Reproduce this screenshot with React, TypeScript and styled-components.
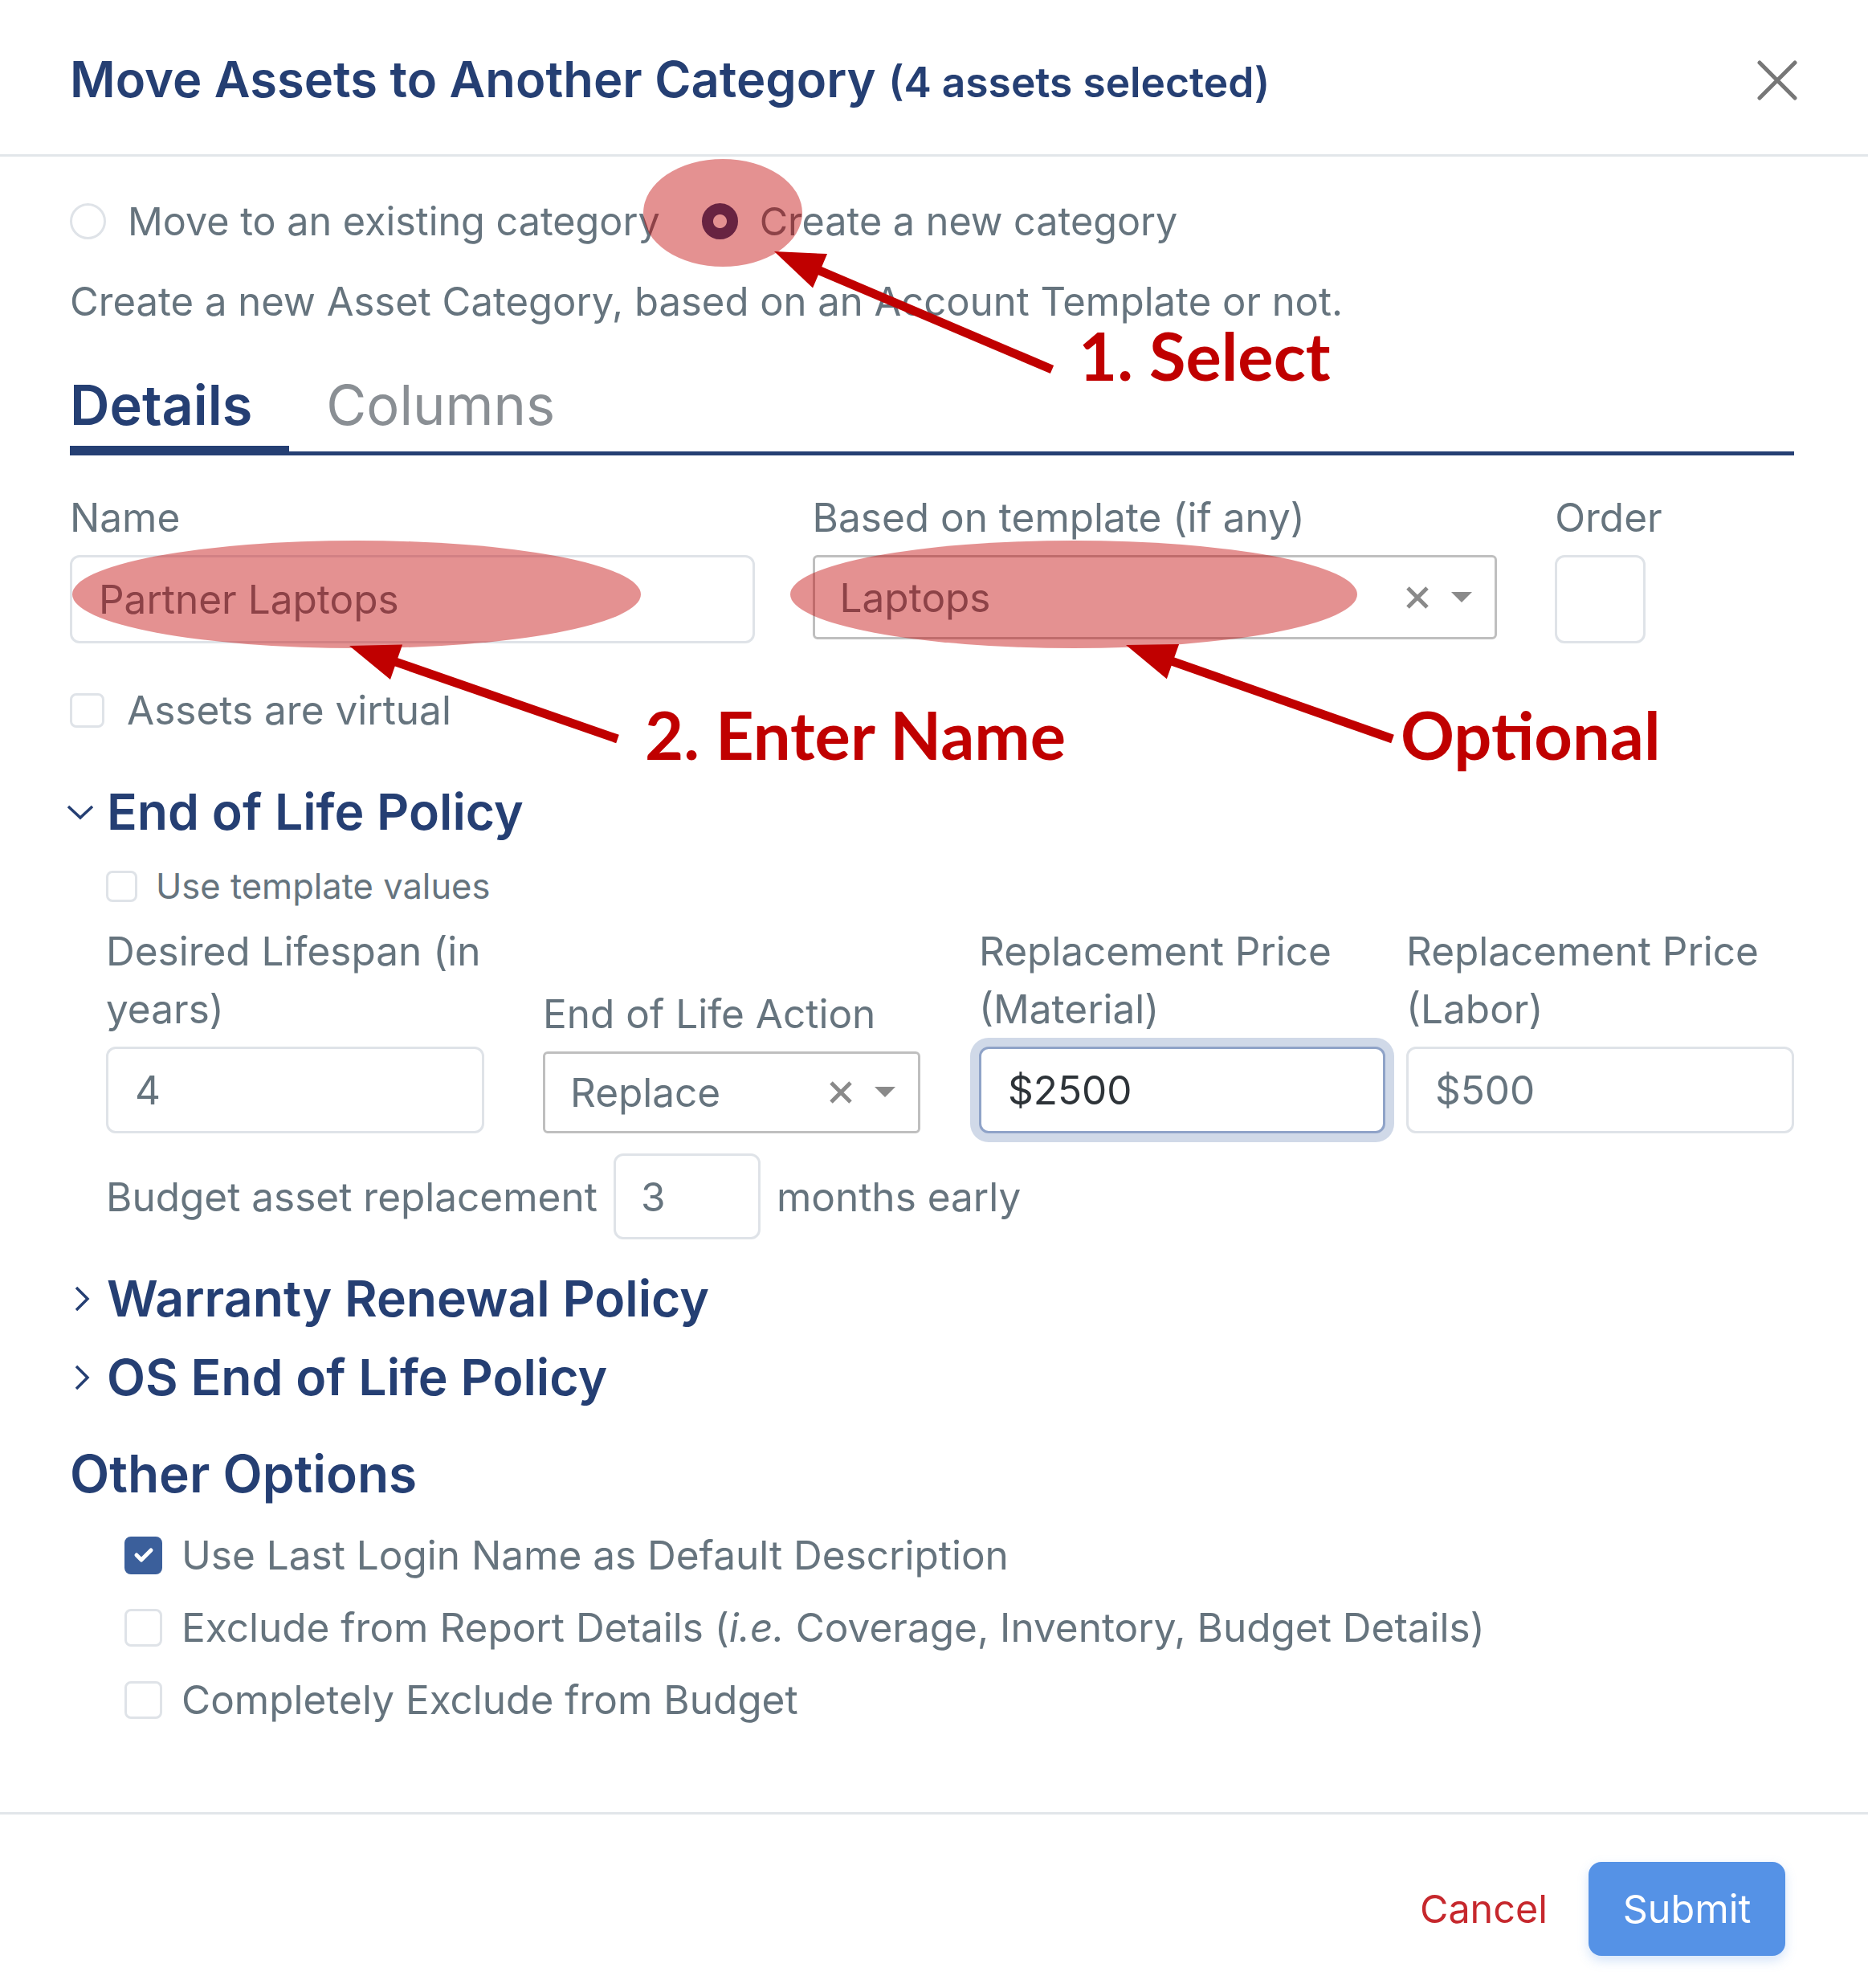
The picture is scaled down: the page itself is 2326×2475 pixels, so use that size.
import React from 'react';
import styled, { createGlobalStyle } from 'styled-components';

const navy = '#253f73';
const muted = '#66747e';
const line = '#dfe3e8';
const red = '#c00000';
const bodySize = 49.5;
const headSize = 62.5;

const GlobalStyle = createGlobalStyle`
  html, body { margin: 0; padding: 0; background: #fff; }
  body { font-family: Inter, "Open Sans", sans-serif; color: ${muted}; }
  * { box-sizing: border-box; }
`;

const Modal = styled.div`
  position: relative;
  width: 2326px;
  min-height: 2475px;
  background: #fff;
  overflow: hidden;
`;

const Header = styled.header`
  height: 195px;
  display: flex;
  align-items: center;
  justify-content: space-between;
  padding: 8px 88px 0 87px;
  border-bottom: 3px solid #e2e6ea;
`;

const Title = styled.h1`
  margin: 0;
  font-size: 61.5px;
  line-height: 72px;
  font-weight: 600;
  color: ${navy};
`;

const TitleNote = styled.span`
  font-size: 51.5px;
  font-weight: 600;
`;

const CloseButton = styled.button`
  width: 50px;
  height: 50px;
  padding: 0;
  border: 0;
  background: none;
  display: flex;
`;

const Body = styled.div`
  padding: 0 92px 104px 87px;
`;

const RadioRow = styled.div`
  margin-top: 44px;
  height: 72px;
  display: flex;
  align-items: center;
  font-size: 48.5px;
`;

const RadioOption = styled.label`
  display: flex;
  align-items: center;
  gap: 27px;
  margin-right: 52px;
`;

const Radio = styled.span<{ $checked?: boolean }>`
  width: 45px;
  height: 45px;
  border-radius: 50%;
  border: 3px solid ${(p) => (p.$checked ? navy : line)};
  background: ${(p) => (p.$checked ? `radial-gradient(circle, #fff 0 8px, ${navy} 9px)` : '#fff')};
`;

const Description = styled.p`
  margin: 29px 0 0;
  font-size: 49px;
  line-height: 72px;
`;

const TabList = styled.div`
  margin-top: 50px;
  display: flex;
  align-items: flex-end;
  box-shadow: inset 0 -5px 0 ${navy};
`;

const Tab = styled.div<{ $active?: boolean }>`
  font-size: 68.5px;
  line-height: 86px;
  padding: 0 46px 7px;
  font-weight: ${(p) => (p.$active ? 600 : 400)};
  color: ${(p) => (p.$active ? navy : '#8a8f94')};
  border-bottom: 12px solid ${(p) => (p.$active ? navy : 'transparent')};
  &:first-child { padding-left: 0; }
`;

const FieldGrid = styled.div`
  margin-top: 41px;
  display: grid;
  grid-template-columns: repeat(12, minmax(0, 1fr));
  column-gap: 72px;
`;

const Field = styled.div<{ $span: number }>`
  grid-column: span ${(p) => p.$span};
  min-width: 0;
  display: flex;
  flex-direction: column;
`;

const Label = styled.label`
  font-size: ${bodySize}px;
  line-height: 72px;
  margin-bottom: 11px;
  color: ${muted};
  white-space: nowrap;
`;

const TextInput = styled.input<{ $focused?: boolean; $height?: number }>`
  width: 100%;
  min-width: 0;
  height: ${(p) => p.$height ?? 110}px;
  border: 3px solid ${(p) => (p.$focused ? '#8fa3c8' : line)};
  border-radius: 12px;
  padding: 0 33px;
  font-family: Inter, "Open Sans", sans-serif;
  font-size: ${bodySize}px;
  color: ${(p) => (p.$focused ? '#2d3338' : muted)};
  background: #fff;
  outline: none;
  box-shadow: ${(p) => (p.$focused ? '0 0 0 11px #d0d9e8' : 'none')};
`;

const SelectBox = styled.div<{ $height: number }>`
  height: ${(p) => p.$height}px;
  display: flex;
  align-items: center;
  border: 3px solid #bfbfbf;
  border-radius: 6px;
  padding: 0 28px 0 31px;
  font-size: ${bodySize}px;
  color: ${muted};
`;

const SelectValue = styled.span`
  flex: 1;
`;

const SelectIcons = styled.span`
  display: flex;
  align-items: center;
  gap: 27px;
`;

const CheckRow = styled.label<{ $small?: boolean; $gap: number }>`
  display: flex;
  align-items: center;
  gap: ${(p) => p.$gap}px;
  font-size: ${(p) => (p.$small ? 43.5 : bodySize)}px;
  line-height: ${(p) => (p.$small ? 63 : 72)}px;
  color: ${muted};
`;

const Checkbox = styled.span<{ $size: number; $checked?: boolean }>`
  width: ${(p) => p.$size}px;
  height: ${(p) => p.$size}px;
  flex: none;
  border-radius: 8px;
  border: 3px solid ${(p) => (p.$checked ? '#3b5f9b' : line)};
  background: ${(p) => (p.$checked ? '#3b5f9b' : '#fff')};
  display: flex;
  align-items: center;
  justify-content: center;
`;

const VirtualRow = styled.div`
  margin-top: 47px;
`;

const SectionToggle = styled.div<{ $gap: number }>`
  margin-top: ${(p) => p.$gap}px;
  display: flex;
  align-items: center;
  gap: 13px;
  font-size: ${headSize}px;
  line-height: 72px;
  font-weight: 600;
  color: ${navy};
  svg { margin-left: -7px; }
`;

const SectionTitle = styled.h2`
  margin: 49px 0 0;
  font-size: ${headSize + 1.5}px;
  line-height: 72px;
  font-weight: 600;
  color: ${navy};
`;

const SectionBody = styled.div`
  padding-left: 45px;
`;

const TemplateRow = styled.div`
  margin-top: 26px;
`;

const PolicyRow = styled.div`
  margin-top: 13px;
  display: flex;
  align-items: flex-end;
`;

const PolicyField = styled.div<{ $width: number; $after: number }>`
  width: ${(p) => p.$width}px;
  margin-right: ${(p) => p.$after}px;
  display: flex;
  flex-direction: column;
`;

const BudgetRow = styled.div`
  margin-top: 25px;
  display: flex;
  align-items: center;
  gap: 20px;
  font-size: ${bodySize}px;
`;

const BudgetInput = styled(TextInput)`
  width: 183px;
  padding: 0 31px;
`;

const OptionList = styled.div`
  margin-top: 29px;
  padding-left: 68px;
  display: flex;
  flex-direction: column;
  gap: 18px;
`;

const Footer = styled.footer`
  border-top: 3px solid #e2e6ea;
  padding: 59px 103px 40px 0;
  display: flex;
  justify-content: flex-end;
  align-items: center;
  gap: 51px;
`;

const CancelButton = styled.button`
  border: 0;
  background: none;
  padding: 0;
  font-family: Inter, "Open Sans", sans-serif;
  font-size: 48.5px;
  color: #c6282d;
`;

const SubmitButton = styled.button`
  width: 245px;
  height: 117px;
  border: 0;
  border-radius: 16px;
  background: #5592e6;
  color: #fff;
  font-family: Inter, "Open Sans", sans-serif;
  font-size: 48.5px;
  box-shadow: 0 6px 14px rgba(85, 146, 230, 0.25);
`;

const Annotations = styled.svg`
  position: absolute;
  left: 0;
  top: 0;
  pointer-events: none;
`;

const AnnoText = styled.text`
  font-family: Lato, "Liberation Sans", sans-serif;
  font-weight: 700;
  font-size: 83px;
  fill: ${red};
`;

const CloseIcon = () => (
  <svg width="50" height="50" viewBox="0 0 50 50">
    <path d="M3 3 L47 47 M47 3 L3 47" stroke="#777" strokeWidth="5" strokeLinecap="round" />
  </svg>
);

const ClearIcon = () => (
  <svg width="30" height="30" viewBox="0 0 30 30">
    <path d="M3 3 L27 27 M27 3 L3 27" stroke="#8a8a8a" strokeWidth="5" />
  </svg>
);

const Caret = () => (
  <svg width="26" height="14" viewBox="0 0 26 14">
    <path d="M0 0 H26 L13 13 Z" fill="#8a8a8a" />
  </svg>
);

const ChevronDown = () => (
  <svg width="40" height="40" viewBox="0 0 40 40">
    <polyline points="5,14 20,28 35,14" fill="none" stroke={navy} strokeWidth="3.5" />
  </svg>
);

const ChevronRight = () => (
  <svg width="40" height="40" viewBox="0 0 40 40">
    <polyline points="15,7 29,21 15,35" fill="none" stroke={navy} strokeWidth="3.5" />
  </svg>
);

const CheckMark = () => (
  <svg width="28" height="28" viewBox="0 0 28 28">
    <polyline points="5,14 11,20 23,8" fill="none" stroke="#fff" strokeWidth="5" strokeLinecap="round" strokeLinejoin="round" />
  </svg>
);

type Pt = [number, number];

const Arrow = ({ from, to }: { from: Pt; to: Pt }) => {
  const [x1, y1] = from;
  const [x2, y2] = to;
  const len = Math.hypot(x2 - x1, y2 - y1);
  const ux = (x2 - x1) / len;
  const uy = (y2 - y1) / len;
  const head = 62;
  const half = 23;
  const bx = x2 - ux * head;
  const by = y2 - uy * head;
  return (
    <g>
      <line x1={x1} y1={y1} x2={bx + ux * 6} y2={by + uy * 6} stroke={red} strokeWidth={11} />
      <polygon
        points={`${x2},${y2} ${bx - uy * half},${by + ux * half} ${bx + uy * half},${by - ux * half}`}
        fill={red}
      />
    </g>
  );
};

const options = [
  { text: <>Use Last Login Name as Default Description</>, checked: true },
  { text: <>Exclude from Report Details (<i>i.e.</i> Coverage, Inventory, Budget Details)</>, checked: false },
  { text: <>Completely Exclude from Budget</>, checked: false },
];

const App = () => {
  return (
    <Modal>
      <GlobalStyle />
      <Header>
        <Title>
          Move Assets to Another Category <TitleNote>(4 assets selected)</TitleNote>
        </Title>
        <CloseButton aria-label="Close">
          <CloseIcon />
        </CloseButton>
      </Header>

      <Body>
        <RadioRow>
          <RadioOption>
            <Radio />
            <span>Move to an existing category</span>
          </RadioOption>
          <RadioOption>
            <Radio $checked />
            <span>Create a new category</span>
          </RadioOption>
        </RadioRow>
        <Description>Create a new Asset Category, based on an Account Template or not.</Description>

        <TabList>
          <Tab $active>Details</Tab>
          <Tab>Columns</Tab>
        </TabList>

        <FieldGrid>
          <Field $span={5}>
            <Label>Name</Label>
            <TextInput readOnly value="Partner Laptops" />
          </Field>
          <Field $span={5}>
            <Label>Based on template (if any)</Label>
            <SelectBox $height={105}>
              <SelectValue>Laptops</SelectValue>
              <SelectIcons>
                <ClearIcon />
                <Caret />
              </SelectIcons>
            </SelectBox>
          </Field>
          <Field $span={1}>
            <Label>Order</Label>
            <TextInput readOnly value="" />
          </Field>
        </FieldGrid>

        <VirtualRow>
          <CheckRow $gap={28}>
            <Checkbox $size={43} />
            Assets are virtual
          </CheckRow>
        </VirtualRow>

        <SectionToggle $gap={54}>
          <ChevronDown />
          End of Life Policy
        </SectionToggle>
        <SectionBody>
          <TemplateRow>
            <CheckRow $small $gap={23}>
              <Checkbox $size={39} />
              Use template values
            </CheckRow>
          </TemplateRow>
          <PolicyRow>
            <PolicyField $width={471} $after={73}>
              <Label>
                Desired Lifespan (in
                <br />
                years)
              </Label>
              <TextInput readOnly value="4" $height={108} />
            </PolicyField>
            <PolicyField $width={470} $after={73}>
              <Label>End of Life Action</Label>
              <SelectBox $height={102}>
                <SelectValue>Replace</SelectValue>
                <SelectIcons>
                  <ClearIcon />
                  <Caret />
                </SelectIcons>
              </SelectBox>
            </PolicyField>
            <PolicyField $width={506} $after={26}>
              <Label>
                Replacement Price
                <br />
                (Material)
              </Label>
              <TextInput readOnly value="$2500" $focused $height={108} />
            </PolicyField>
            <PolicyField $width={483} $after={0}>
              <Label>
                Replacement Price
                <br />
                (Labor)
              </Label>
              <TextInput readOnly value="$500" $height={108} />
            </PolicyField>
          </PolicyRow>
          <BudgetRow>
            <span>Budget asset replacement</span>
            <BudgetInput readOnly value="3" $height={107} />
            <span>months early</span>
          </BudgetRow>
        </SectionBody>

        <SectionToggle $gap={37}>
          <ChevronRight />
          Warranty Renewal Policy
        </SectionToggle>
        <SectionToggle $gap={26}>
          <ChevronRight />
          OS End of Life Policy
        </SectionToggle>

        <SectionTitle>Other Options</SectionTitle>
        <OptionList>
          {options.map((o, i) => (
            <CheckRow key={i} $gap={24}>
              <Checkbox $size={47} $checked={o.checked}>
                {o.checked && <CheckMark />}
              </Checkbox>
              <span>{o.text}</span>
            </CheckRow>
          ))}
        </OptionList>
      </Body>

      <Footer>
        <CancelButton>Cancel</CancelButton>
        <SubmitButton>Submit</SubmitButton>
      </Footer>

      <Annotations width="2326" height="2475" viewBox="0 0 2326 2475">
        <ellipse cx="900" cy="265" rx="99" ry="67" fill="rgba(192,0,0,0.43)" />
        <ellipse cx="444" cy="740" rx="354" ry="67" fill="rgba(192,0,0,0.43)" />
        <ellipse cx="1337" cy="740" rx="353" ry="67" fill="rgba(192,0,0,0.43)" />
        <Arrow from={[1310, 460]} to={[964, 313]} />
        <Arrow from={[769, 920]} to={[435, 804]} />
        <Arrow from={[1734, 920]} to={[1402, 803]} />
        <AnnoText x="1343" y="474">1. Select</AnnoText>
        <AnnoText x="803" y="946">2. Enter Name</AnnoText>
        <AnnoText x="1744" y="946">Optional</AnnoText>
      </Annotations>
    </Modal>
  );
};

export default App;
